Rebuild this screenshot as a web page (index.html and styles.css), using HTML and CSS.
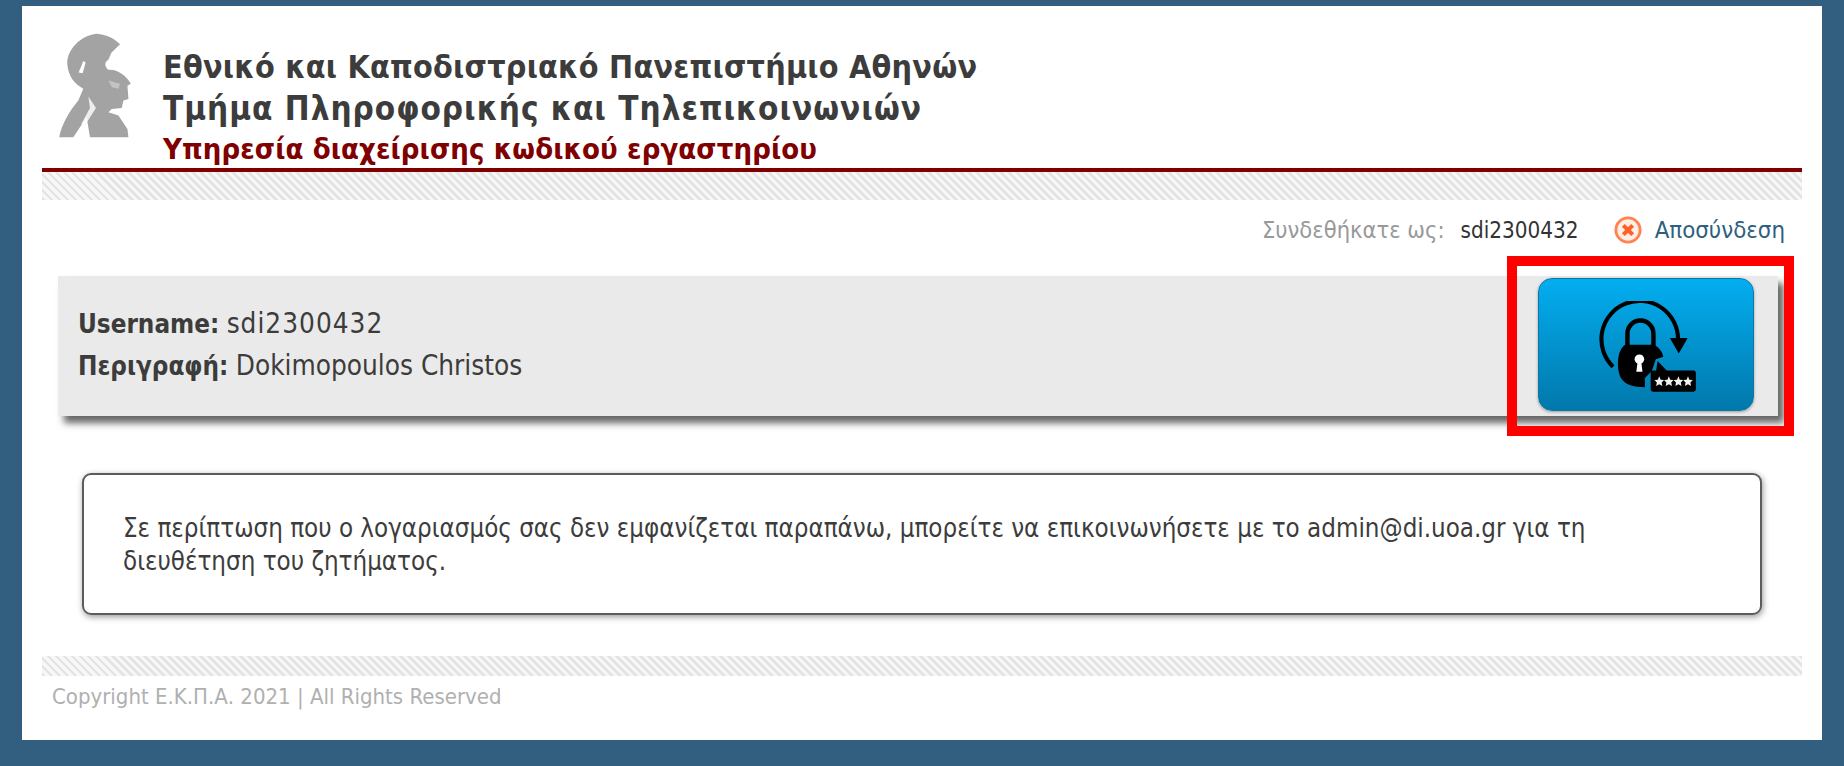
FILE: index.html
```html
<!DOCTYPE html>
<html lang="el">
<head>
<meta charset="utf-8">
<title>Υπηρεσία διαχείρισης κωδικού εργαστηρίου</title>
<link rel="stylesheet" href="styles.css">
</head>
<body>
<main class="card">
  <header class="header">
    <svg class="logo" viewBox="55 35 220 320" aria-hidden="true">
      <path fill="#a3a3a3" d="M170 40C200 42 225 55 240 72L226 85L214 97L205 118C192 124 194 140 205 148C230 145 260 165 272 190L262 196L265 235L250 240L245 262L215 265L205 275L235 285L262 325L265 350L150 350L140 290L100 350L58 350C65 310 90 270 115 240L130 205C105 190 85 170 82 130C80 90 120 45 170 40Z"/>
      <path fill="#fff" d="M130 122L137 126L128 158L116 156Z"/>
      <path fill="#fff" d="M145 228L168 262L132 318L124 310L150 262Z" opacity=".8"/>
      <path fill="#fff" d="M205 180L240 190L235 205L215 200Z" opacity=".35"/>
    </svg>
    <div class="titles">
      <h1 class="title">Εθνικό και Καποδιστριακό Πανεπιστήμιο Αθηνών</h1>
      <h1 class="title title-second">Τμήμα Πληροφορικής και Τηλεπικοινωνιών</h1>
      <h2 class="subtitle">Υπηρεσία διαχείρισης κωδικού εργαστηρίου</h2>
    </div>
  </header>
  <div class="hatch"></div>
  <div class="userbar">
    <span class="muted">Συνδεθήκατε ως:</span>
    <span class="who">sdi2300432</span>
    <svg class="logout-icon" viewBox="0 0 30 30" aria-hidden="true">
      <circle cx="15" cy="15" r="13" fill="#ffeee6" stroke="#ff8250" stroke-width="3"/>
      <path d="M10 10L20 20M20 10L10 20" stroke="#ff5f28" stroke-width="4.4"/>
    </svg>
    <a class="logout" href="#">Αποσύνδεση</a>
  </div>
  <section class="panel">
    <div class="account">
      <p class="row"><b>Username:</b> <span class="value value-id">sdi2300432</span></p>
      <p class="row"><b>Περιγραφή:</b> <span class="value">Dokimopoulos Christos</span></p>
    </div>
    <button class="reset" type="button" aria-label="Αλλαγή κωδικού">
      <svg class="reset-icon" viewBox="0 0 450 330" aria-hidden="true">
        <path d="M155 192A112 112 0 1 1 345 112" fill="none" stroke="#000" stroke-width="12"/>
        <path d="M321 108H373L347 153Z" fill="#000"/>
        <path d="M197 135V95A38 38 0 0 1 273 95V135" fill="none" stroke="#000" stroke-width="13"/>
        <path d="M190 128H270C285 130 298 145 302 163L280 170L268 205L248 225V252C215 252 190 245 178 225C165 200 165 145 190 128Z" fill="#000"/>
        <circle cx="232" cy="170" r="14" fill="#fff"/>
        <path d="M227 175H237L241 207H223Z" fill="#fff"/>
        <path d="M285 175L312 203H390Q397 203 397 210V258Q397 265 390 265H272Q265 265 265 258V210Q265 203 272 203H281Z" fill="#000"/>
        <g fill="#f0f0f0">
          <path d="M290 220L294 230L304 231L297 238L299 248L290 243L281 248L283 238L276 231L286 230Z"/>
          <path d="M318 220L322 230L332 231L325 238L327 248L318 243L309 248L311 238L304 231L314 230Z"/>
          <path d="M346 220L350 230L360 231L353 238L355 248L346 243L337 248L339 238L332 231L342 230Z"/>
          <path d="M374 220L378 230L388 231L381 238L383 248L374 243L365 248L367 238L360 231L370 230Z"/>
        </g>
      </svg>
    </button>
  </section>
  <section class="notice">
    <p class="notice-text">Σε περίπτωση που ο λογαριασμός σας δεν εμφανίζεται παραπάνω, μπορείτε να επικοινωνήσετε με το admin@di.uoa.gr για τη διευθέτηση του ζητήματος.</p>
  </section>
  <div class="hatch hatch-footer"></div>
  <footer class="copyright">Copyright Ε.Κ.Π.Α. 2021 | All Rights Reserved</footer>
  <div class="highlight"></div>
</main>
</body>
</html>
```
FILE: styles.css
```css
* { box-sizing: border-box; }
html, body { margin: 0; height: 100%; }
body {
  background: #325f7f;
  padding: 6px 22px 26px;
  font-family: "DejaVu Sans", "Noto Sans", sans-serif;
  font-stretch: condensed;
  color: #3c3c3c;
}
.card {
  position: relative;
  background: #fff;
  height: 734px;
  overflow: hidden;
}
.header {
  display: flex;
  margin: 0 20px;
  height: 166px;
  border-bottom: 4px solid #800000;
  padding-left: 16px;
}
.logo {
  width: 74px;
  height: 107px;
  margin-top: 26px;
  flex: none;
  filter: blur(.5px);
}
.titles { margin-left: 31px; padding-top: 40px; }
.title {
  margin: 0;
  font-size: 32px;
  line-height: 42px;
  letter-spacing: .23px;
  font-weight: 700;
  color: #3c3c3c;
  white-space: nowrap;
}
.title-second { font-size: 33px; letter-spacing: 1px; }
.subtitle {
  margin: 2px 0 0;
  font-size: 29px;
  line-height: 34px;
  letter-spacing: .1px;
  font-weight: 700;
  color: #800000;
  white-space: nowrap;
}
.hatch {
  height: 28px;
  margin: 0 20px;
  background: repeating-linear-gradient(45deg, #e4e4e4 0, #e4e4e4 2.8px, #f7f7f7 2.8px, #f7f7f7 5.66px);
}
.userbar {
  display: flex;
  align-items: center;
  justify-content: flex-end;
  height: 76px;
  padding: 0 37px 16px 0;
}
.muted { color: #999; font-size: 23.5px; }
.who { margin-left: 16px; color: #333; font-size: 22.3px; }
.logout-icon { width: 28px; height: 28px; margin-left: 35px; filter: blur(.4px); }
.logout { margin-left: 13px; color: #2f5f80; text-decoration: none; font-size: 23.8px; }
.panel {
  display: flex;
  justify-content: space-between;
  align-items: center;
  margin-left: 36px;
  width: 1720px;
  height: 140px;
  background: #eaeaea;
  box-shadow: 6px 7px 7px #666;
  padding: 2px 24px 5px 20px;
}
.row { margin: 0; font-size: 25.8px; line-height: 42px; }
.row b { font-weight: 700; }
.value { font-size: 27.7px; }
.value-id { letter-spacing: 1px; }
.reset {
  width: 216px;
  height: 133px;
  padding: 22px 0 0 21px;
  border: 1px solid #0c78a8;
  border-radius: 14px;
  background: linear-gradient(#03aef0, #0178ab);
  box-shadow: 0 1px 3px rgba(0,0,0,.35);
  display: flex;
  align-items: flex-start;
  justify-content: flex-start;
}
.reset-icon { width: 154px; height: 113px; filter: blur(.4px); }
.notice {
  margin: 57px 0 0 60px;
  width: 1680px;
  height: 142px;
  border: 2px solid #5c5c5c;
  border-radius: 9px;
  box-shadow: 1px 2px 6px #999;
  padding: 37px 40px 0 39px;
}
.notice-text { margin: 0; font-size: 25.7px; line-height: 33px; }
.hatch-footer {
  height: 20px;
  margin: 41px 20px 0;
}
.copyright {
  margin: 7px 0 0 30px;
  font-size: 22px;
  color: #b0b0b0;
  line-height: 28px;
}
.highlight {
  position: absolute;
  left: 1485px;
  top: 250px;
  width: 287px;
  height: 180px;
  border: 10px solid #f00;
}
```
